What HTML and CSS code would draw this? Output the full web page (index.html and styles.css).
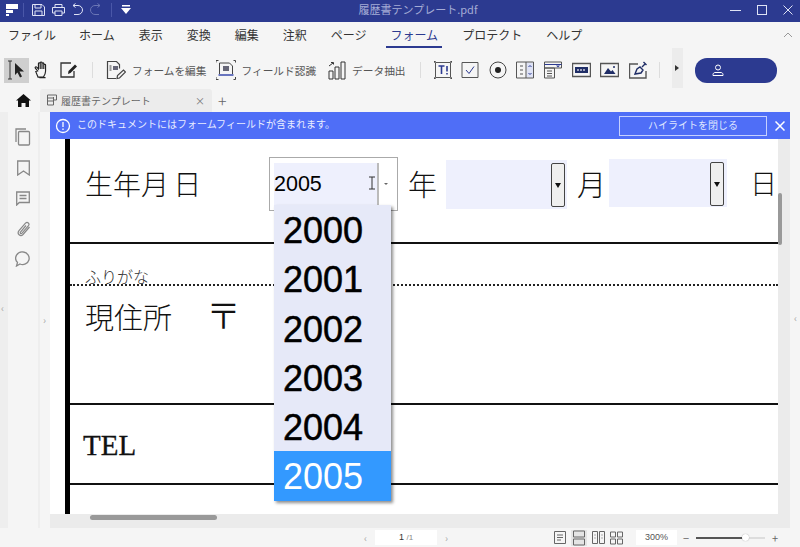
FILE: index.html
```html
<!DOCTYPE html>
<html lang="ja">
  <head>
    <meta charset="UTF-8" />
    <title>履歴書テンプレート.pdf</title>
    <link rel="stylesheet" href="styles.css">
  </head>
  <body>
    <div class="app">
      <header class="titlebar">
        <div class="quick">
          <svg class="logo" width="12" height="12" viewBox="0 0 12 12"><path d="M0 0h12v5H0zM0 6h7v3H0zM0 10h3v2H0z" fill="#fff"/></svg>
          <span class="vsep"></span>
          <svg class="ic-save" width="13" height="14" viewBox="0 0 13 14" fill="none" stroke="#dfe3f5"><path d="M.5 1.500h9.500l2.500 2.500v8.500h-12zM3 1.500v3.500h6v-3.500M3 12.500v-4.500h7v4.500"/></svg>
          <svg width="13" height="14" viewBox="0 0 13 14" fill="none" stroke="#dfe3f5"><path d="M3 4.500v-3h7v3M3 10h-2.500v-5.500h12v5.500h-2.500M3 8h7v4.500h-7z"/></svg>
          <svg width="11" height="14" viewBox="0 0 11 14" fill="none" stroke="#dfe3f5"><path d="M1 2.500h5a4.200 4.200 0 0 1 0 9h-4M1 2.500l2.500-2M1 2.500l2.500 2"/></svg>
          <svg width="11" height="14" viewBox="0 0 11 14" fill="none" stroke="#6a75b5"><path d="M10 2.500h-5a4.200 4.200 0 0 0 0 9h4M10 2.500l-2.500-2M10 2.500l-2.500 2"/></svg>
          <span class="vsep dim"></span>
          <svg width="10" height="10" viewBox="0 0 10 10"><path d="M1 0h8v1.500h-8zM0 3h10l-5 6z" fill="#fff"/></svg>
        </div>
        <div class="doc-title">履歴書テンプレート.pdf</div>
        <div class="winbtns">
          <svg width="12" height="12" viewBox="0 0 12 12"><path d="M0 6.500h11" stroke="#dfe3f5"/></svg>
          <svg width="12" height="12" viewBox="0 0 12 12" fill="none"><rect x="1.500" y="1.500" width="9" height="9" stroke="#dfe3f5"/></svg>
          <svg width="12" height="12" viewBox="0 0 12 12"><path d="M1.500 1.500l9 9M10.500 1.500l-9 9" stroke="#dfe3f5"/></svg>
        </div>
      </header>

      <nav class="menubar">
        <span class="menu m-file">ファイル</span>
        <span class="menu m-home">ホーム</span>
        <span class="menu">表示</span>
        <span class="menu">変換</span>
        <span class="menu">編集</span>
        <span class="menu">注釈</span>
        <span class="menu">ページ</span>
        <span class="menu active">フォーム</span>
        <span class="menu">プロテクト</span>
        <span class="menu">ヘルプ</span>
        <svg class="collapse" width="10" height="6" viewBox="0 0 10 6" fill="none"><path d="M1 5l4-4 4 4" stroke="#999"/></svg>
      </nav>

      <div class="toolbar">
        <div class="tool sel">
          <svg width="24" height="24" viewBox="0 0 24 24"><path d="M3 3h4M3 21h4M5 3v18" stroke="#333" fill="none"/><path d="M10 5l9 8.500h-4.500l2.500 5-2 1-2.500-5-2.500 2.500z" fill="#222"/></svg>
        </div>
        <svg class="tool-ic" width="16" height="20" viewBox="0 0 18 20" fill="none" stroke="#222" stroke-width="1.300"><path d="M4 11l-2.500-3c-.8-1.200.7-2.200 1.600-1.200l1.900 2V3c0-1.500 2-1.500 2 0v-1c0-1.300 2-1.300 2 0v1c0-1.300 2-1.300 2 0v1.500c0-1.200 2-1.200 2 0v7c0 3-1.500 5-2.500 6.500h-6c-.5-2-1.500-3-2.500-6.500zM7 3v6M9 2v7M11 3v6M6 18.500h7"/></svg>
        <svg class="tool-ic gap-l" width="18" height="16" viewBox="0 0 18 16" fill="none" stroke="#333" stroke-width="1.300"><path d="M14 9v6h-13v-14h10"/><path d="M8 12l.5-3 6.500-6.500 2 2-6.500 6.500z" fill="#222" stroke="none"/></svg>
        <span class="tsep s1"></span>
        <div class="labeled l1">
          <svg width="20" height="20" viewBox="0 0 20 20" fill="none" stroke="#444" stroke-width="1.200"><path d="M10 18.500h-8.500v-17h9l3 3v4"/><path d="M7 6h5v4h-5z" fill="#667" stroke="none"/><path d="M3.500 6h2M3.500 8h2M3.500 10h2" stroke-width="1"/><path d="M11 18.500l.5-3 6-5.500 2 2-6 6z"/></svg>
          <span>フォームを編集</span>
        </div>
        <div class="labeled l2">
          <svg width="20" height="20" viewBox="0 0 20 20" fill="none" stroke="#444"><path d="M0 2.500v-2h2.500M17.500.500h2v2M0 17v2.500h2.500M17.500 19.500h2v-2.500"/><path d="M3.500 14v-11h10l3 3v8"/><path d="M7 6h6v5h-6z" fill="#667" stroke="none"/><path d="M2.500 15h15" stroke="#3949ab" stroke-width="1.500"/></svg>
          <span>フィールド認識</span>
        </div>
        <div class="labeled l3">
          <svg width="18" height="20" viewBox="0 0 18 20" fill="none" stroke="#333"><path d="M1 11h4v8h-4zM7 7h4v12h-4zM13 2h4v17h-4z"/><path d="M1 6l4-3M3 2.500h2.500v2"/></svg>
          <span>データ抽出</span>
        </div>
        <span class="tsep s2"></span>
        <div class="form-tools">
          <svg width="18" height="18" viewBox="0 0 18 18" fill="none" stroke="#555"><path d="M1.500 1.500h15v15h-15z"/><path d="M4.500 5h6M7.500 5v8M13 5v5.500M13 12v1.500" stroke="#2c3a90" stroke-width="1.600"/><path d="M0 2v-2h2M16 0h2v2M0 16v2h2M18 16v2h-2" stroke="#111"/></svg>
          <svg width="18" height="18" viewBox="0 0 18 18" fill="none" stroke="#555"><path d="M1 1.500h16v15h-16z"/><path d="M5 9l3 3.500 5-7" stroke="#2c3a90"/></svg>
          <svg width="18" height="18" viewBox="0 0 18 18" fill="none" stroke="#444"><circle cx="9" cy="9" r="8"/><circle cx="9" cy="9" r="3" fill="#222" stroke="none"/></svg>
          <svg width="18" height="18" viewBox="0 0 18 18" fill="none" stroke="#555"><path d="M10.500 1.500h6.500v15h-6.500z" fill="#dfe3f5" stroke="none"/><path d="M.5 1h17v16h-17zM10 1v16"/><path d="M4 5h3M4 9h3M4 13h3"/><path d="M12.500 6l1.500-1.500 1.500 1.500M12.500 12l1.500 1.500 1.500-1.500" stroke="#2c3a90"/></svg>
          <svg width="18" height="18" viewBox="0 0 18 18" fill="none" stroke="#555"><path d="M.5 1h17v6h-17zM.5 7h10v10h-10z"/><path d="M.5 3.500h17" stroke="#2c3a90"/><path d="M3 10h5M3 12.500h5M3 15h5"/><path d="M12 4.500h4l-2 2z" fill="#2c3a90" stroke="none"/></svg>
          <svg width="19" height="18" viewBox="0 0 19 18" fill="none" stroke="#555" class="thick"><path d="M.5 2.500h18v13h-18z"/><rect x="3" y="6" width="13" height="6" fill="#1f2d66" stroke="none"/><path d="M5 9h9" stroke="#ccd" stroke-dasharray="2 1"/></svg>
          <svg width="19" height="18" viewBox="0 0 19 18" fill="none" stroke="#555" class="thick"><path d="M.5 2.500h18v13h-18z"/><path d="M4 13l4-6 3 3.500 1.500-1.500 3 4z" fill="#1f2d66" stroke="none"/><circle cx="14" cy="6" r="1" fill="#1f2d66" stroke="none"/></svg>
          <svg width="19" height="18" viewBox="0 0 19 18" fill="none" stroke="#555" class="thick"><path d="M9 3h-8.500v14h16.500v-7"/><path d="M6 13l2-5 3-2 3 3-2 3zM13 6l3-3M14.500 1l3 3" stroke="#1f2d66"/></svg>
        </div>
        <span class="tsep s3"></span>
        <div class="expander"><svg width="4" height="6" viewBox="0 0 4 6"><path d="M0 0l4 3-4 3z" fill="#333"/></svg></div>
        <div class="account">
          <svg width="12" height="13" viewBox="0 0 12 13" fill="none" stroke="#fff"><circle cx="6" cy="3.500" r="2.500"/><path d="M1 11.500v-1c0-1 1-2 2-2h6c1 0 2 1 2 2v1z"/></svg>
        </div>
      </div>

      <div class="tabrow">
        <svg class="home" width="15" height="13" viewBox="0 0 15 13"><path d="M7.500 0l7.500 6.500h-2v6.500h-3.500v-4h-4v4h-3.500v-6.500h-2z" fill="#111"/></svg>
        <div class="tab">
          <svg width="10" height="12" viewBox="0 0 10 12" fill="none" stroke="#666"><path d="M.5 1h9v5h-3M.5 1v10h6v-8M.5 4h6M.5 7h6"/></svg>
          <span class="tab-name">履歴書テンプレート</span>
          <span class="tab-x">×</span>
        </div>
        <span class="tab-plus">+</span>
      </div>

      <div class="workarea">
        <aside class="sidebar">
          <div class="side-icons">
            <svg width="16" height="18" viewBox="0 0 16 18" fill="none" stroke="#888" stroke-width="1.300"><path d="M1 14v-13h10"/><rect x="3.500" y="3.500" width="11" height="13.500" rx="1"/></svg>
            <svg width="13" height="16" viewBox="0 0 13 16" fill="none" stroke="#888" stroke-width="1.300"><path d="M.7 1h11.600v14l-5.800-4-5.800 4z"/></svg>
            <svg width="14" height="15" viewBox="0 0 14 15" fill="none" stroke="#888" stroke-width="1.300"><path d="M.7 1h12.600v10.500h-10l-2.600 2.500zM3.500 4.500h7M3.500 7.500h7"/></svg>
            <svg width="15" height="16" viewBox="0 0 15 16" fill="none" stroke="#888" stroke-width="1.200"><path d="M13.500 6l-6.500 7.500c-2.500 2.500-6.500-.5-4-3.800l6.500-7.500c2-2 4.500.5 3 2.500l-6.500 7.500c-1 1-2.300 0-1.500-1.200l5.500-6.500"/></svg>
            <svg width="16" height="16" viewBox="0 0 16 16" fill="none" stroke="#888" stroke-width="1.300"><path d="M8.500 1a6.500 6.300 0 1 1-3.500 12l-3.500 2 1-3.500a6.500 6.300 0 0 1 6-10.500z"/></svg>
          </div>
        </aside>
        <div class="splitter"></div>
        <span class="edge-arrow ea-left">‹</span>
        <span class="edge-arrow ea-mid">›</span>
        <span class="edge-arrow ea-right">‹</span>

        <main class="viewer">
          <div class="banner">
            <svg width="16" height="16" viewBox="0 0 16 16" fill="none" stroke="#fff" stroke-width="1.300"><circle cx="8" cy="8" r="6.500"/><path d="M8 4v5M8 10.500v1.500"/></svg>
            <span class="banner-text">このドキュメントにはフォームフィールドが含まれます。</span>
            <button class="hl-close">ハイライトを閉じる</button>
            <svg class="banner-x" width="10" height="10" viewBox="0 0 10 10"><path d="M.5.500l9 9M9.500.500l-9 9" stroke="#fff" stroke-width="1.500"/></svg>
          </div>

          <div class="docrow">
            <div class="page">
              <span class="pdf-text birth">生年月 日</span>
              <span class="pdf-text nen">年</span>
              <span class="pdf-text tsuki">月</span>
              <span class="pdf-text hi">日</span>
              <span class="rule r1"></span>
              <span class="furigana">ふりがな</span>
              <span class="rule dotted"></span>
              <span class="pdf-text addr">現住所</span>
              <span class="pdf-text zip">〒</span>
              <span class="rule r2"></span>
              <span class="tel">TEL</span>
              <span class="rule r3"></span>

              <div class="field focus">
                <div class="field-in">2005
                  <svg class="ibeam" width="8" height="14" viewBox="0 0 8 14" fill="none" stroke="#333"><path d="M1 1h6M1 13h6M4 1v12"/></svg>
                </div>
                <div class="field-btn"><span class="caret small"></span></div>
              </div>
              <div class="field f-month"><div class="combo-btn"><span class="caret"></span></div></div>
              <div class="field f-day"><div class="combo-btn"><span class="caret"></span></div></div>

              <ul class="dropdown">
                <li>2000</li>
                <li>2001</li>
                <li>2002</li>
                <li>2003</li>
                <li>2004</li>
                <li class="picked">2005</li>
              </ul>
            </div>
            <div class="vscroll"><div class="vthumb"></div></div>
          </div>
          <div class="hscroll"><div class="hthumb"></div></div>
        </main>
        <div class="right-edge"></div>
      </div>

      <footer class="statusbar">
        <span class="pg-arrow">‹</span>
        <div class="pg-box"><b>1</b> <small>/1</small></div>
        <span class="pg-arrow">›</span>
        <div class="views">
          <svg width="12" height="15" viewBox="0 0 12 15" fill="none" stroke="#666"><path d="M.5 1.500h11v12h-11zM3 5h6M3 7.500h6M3 10h4"/></svg>
          <span class="view-on"><svg width="14" height="16" viewBox="0 0 14 16" fill="none" stroke="#666"><path d="M1.500 1h11v6h-11zM1.500 9h11v6h-11z"/></svg></span>
          <svg width="13" height="15" viewBox="0 0 13 15" fill="none" stroke="#666"><path d="M.5 1.500h5v12h-5zM7.500 1.500h5v12h-5zM2.500 5h1M2.500 8h1M9.500 5h1M9.500 8h1"/></svg>
          <svg width="13" height="15" viewBox="0 0 13 15" fill="none" stroke="#666"><path d="M.5 2h5v5h-5zM7.500 2h5v5h-5zM.5 9h5v5h-5zM7.500 9h5v5h-5z"/></svg>
        </div>
        <div class="zoom-box">300%</div>
        <span class="zoom-op">−</span>
        <div class="slider"><div class="slider-fill"></div><div class="slider-knob"></div></div>
        <span class="zoom-op plus">+</span>
      </footer>
    </div>
  </body>
</html>
```

FILE: styles.css
```css
* {
  box-sizing: border-box;
}

body {
  margin: 0;
  width: 800px;
  height: 547px;
  overflow: hidden;
  background: #f5f5f5;
  font-family: "Noto Sans CJK JP", "Noto Sans", sans-serif;
  color: #333;
}

.app {
  display: flex;
  flex-direction: column;
  height: 547px;
}

/* title bar */
.titlebar {
  height: 22px;
  background: #2c3a90;
  display: flex;
  align-items: center;
  position: relative;
  flex: none;
  padding-bottom: 2px;
}

.quick {
  display: flex;
  align-items: center;
  gap: 7px;
  padding-left: 6px;
}

.vsep {
  width: 1px;
  height: 14px;
  background: #4a57a8;
  margin-left: -2px;
}

.ic-save {
  margin-left: 1px;
}

.vsep.dim {
  margin: 0 2px 0 3px;
}

.doc-title {
  position: absolute;
  left: 36px;
  right: 0;
  top: 0;
  text-align: center;
  font-size: 11px;
  color: #a5acd6;
  line-height: 18px;
}

.winbtns {
  margin-left: auto;
  display: flex;
  gap: 14px;
  padding-right: 6px;
}

/* menu */
.menubar {
  height: 26px;
  flex: none;
  display: flex;
  align-items: center;
  font-size: 12px;
  position: relative;
  background: #f5f5f5;
}

.menu {
  position: relative;
  height: 26px;
  line-height: 26px;
  margin-left: 24px;
  color: #333;
}

.m-file {
  margin-left: 8px;
}

.m-home {
  margin-left: 23px;
}

.menu.active {
  color: #2c3a90;
  border-bottom: 2px solid #2c3a90;
  padding: 0 4px;
  margin: 0 -4px 0 20px;
}

.collapse {
  margin-left: auto;
  margin-right: 7px;
}

/* toolbar */
.toolbar {
  height: 40px;
  flex: none;
  display: flex;
  align-items: center;
  padding: 4px 0 0 4px;
  font-size: 10.700px;
  color: #555;
}

.tool {
  width: 25px;
  height: 25px;
  background: #cfcfcf;
  display: flex;
  align-items: center;
  justify-content: center;
}

.tool-ic {
  margin-left: 5px;
}

.tool-ic.gap-l {
  margin-left: 10px;
}

.tsep {
  width: 1px;
  height: 16px;
  background: #ddd;
}

.tsep.s1 {
  margin: 0 13px 0 14px;
}

.tsep.s2 {
  margin: 0 13px 0 14px;
}

.tsep.s3 {
  margin: 0 12px 0 11px;
}

.labeled {
  display: flex;
  align-items: center;
  gap: 6px;
  white-space: nowrap;
}

.l2 {
  margin-left: 9px;
}

.l3 {
  margin-left: 12px;
}

.form-tools {
  display: flex;
  align-items: center;
  gap: 9.600px;
}

.form-tools .thick {
  stroke-width: 1.400;
}

.expander {
  width: 11px;
  height: 40px;
  align-self: flex-start;
  margin-top: -4px;
  background: #ececec;
  display: flex;
  align-items: center;
  justify-content: center;
}

.account {
  margin-left: 12px;
  width: 82px;
  height: 25px;
  border-radius: 12px;
  background: #2c3a90;
  display: flex;
  align-items: center;
  padding-left: 17px;
}

/* tabs */
.tabrow {
  height: 24px;
  flex: none;
  display: flex;
  align-items: center;
  background: #f5f5f5;
}

.home {
  margin-left: 16px;
}

.tab {
  margin-left: 9px;
  width: 172px;
  height: 23px;
  background: #ececec;
  border-radius: 3px 3px 0 0;
  display: flex;
  align-items: center;
  padding-left: 7px;
  font-size: 10px;
  color: #666;
}

.tab-name {
  margin-left: 4px;
}

.tab-x {
  margin-left: auto;
  margin-right: 7px;
  font-size: 10px;
  color: #777;
}

.tab-plus {
  margin-left: 6px;
  font-size: 16px;
  color: #666;
  font-weight: 300;
}

/* main area */
.workarea {
  flex: 1;
  display: flex;
  min-height: 0;
  position: relative;
}

.sidebar {
  width: 40px;
  flex: none;
  border-left: 8px solid #eeeeee;
  border-right: 2px solid #eeeeee;
}

.side-icons {
  display: grid;
  grid-auto-rows: 30.500px;
  justify-items: center;
  align-items: center;
  padding-top: 10px;
}

.splitter {
  width: 10px;
  flex: none;
}

.edge-arrow {
  position: absolute;
  font-size: 10px;
  line-height: 12px;
  color: #aaa;
}

.ea-left { left: 1px; top: 190px; }
.ea-mid { left: 43px; top: 202px; }
.ea-right { left: 794px; top: 200px; }

.viewer {
  width: 740px;
  flex: none;
  display: flex;
  flex-direction: column;
  background: #ebebeb;
}

.banner {
  height: 27px;
  flex: none;
  background: #4f6ef7;
  display: flex;
  align-items: center;
  padding-left: 5px;
  color: #fff;
  font-size: 10px;
}

.banner-text {
  margin: 0 0 4px 6px;
  color: #e8ecff;
}

.hl-close {
  margin-left: auto;
  width: 148px;
  height: 20px;
  background: transparent;
  border: 1px solid #c5d0ff;
  color: #dfe5ff;
  font-family: inherit;
  font-size: 10px;
  padding: 0 0 3px;
}

.banner-x {
  margin: 0 5px 0 8px;
}

.docrow {
  flex: 1;
  display: flex;
  min-height: 0;
}

.page {
  width: 728px;
  flex: none;
  background: #fff;
  position: relative;
  overflow: hidden;
}

/* thick left margin of the form */
.page::before {
  content: "";
  position: absolute;
  left: 15px;
  top: 0;
  bottom: 0;
  width: 5px;
  background: #000;
}

.pdf-text {
  position: absolute;
  font-size: 29px;
  line-height: 34px;
  color: #111;
  font-weight: 300;
  font-family: "Noto Sans CJK JP", sans-serif;
}

.birth { left: 35px; top: 27px; font-size: 28px; word-spacing: -2px; }
.nen { left: 358px; top: 27px; }
.tsuki { left: 527px; top: 27px; }
.hi { left: 700px; top: 27px; font-size: 27px; }
.addr { left: 35px; top: 160px; }
.zip { left: 156px; top: 155px; font-size: 35px; line-height: 40px; }

.rule {
  position: absolute;
  left: 20px;
  right: 0;
  height: 2px;
  background: #111;
}

.r1 { top: 103px; }
.r2 { top: 264px; }
.r3 { top: 344px; }

.rule.dotted {
  top: 145px;
  background: none;
  border-top: 2px dotted #222;
}

.furigana {
  position: absolute;
  left: 35px;
  top: 128px;
  font-size: 16px;
  line-height: 18px;
  color: #333;
  font-family: "Noto Sans CJK JP", sans-serif;
  font-weight: 300;
}

.tel {
  position: absolute;
  left: 33px;
  top: 290px;
  font-family: "Liberation Serif", serif;
  font-size: 29px;
  line-height: 32px;
  color: #111;
  -webkit-text-stroke: 0.3px #111;
}

.field {
  position: absolute;
  background: #eef0fd;
}

.field.focus {
  left: 219px;
  top: 18px;
  width: 129px;
  height: 54px;
  background: #fff;
  border: 1px solid #aaa;
  padding: 5px 5px 5px 4px;
  display: flex;
}

.field-in {
  width: 105px;
  background: #eef0fd;
  font-family: "Liberation Sans", sans-serif;
  font-size: 21.500px;
  line-height: 42px;
  color: #000;
  position: relative;
  border-right: 2px solid #bbb;
}

.ibeam {
  position: absolute;
  left: 94px;
  top: 13px;
}

.field-btn {
  width: 13px;
  display: flex;
  align-items: center;
  justify-content: center;
}

.caret {
  width: 0;
  height: 0;
  border-left: 3px solid transparent;
  border-right: 3px solid transparent;
  border-top: 5px solid #111;
}

.caret.small {
  border-width: 2px 2px 0;
  border-top-color: #666;
}

.f-month {
  left: 396px;
  top: 21px;
  width: 121px;
  height: 49px;
}

.f-day {
  left: 559px;
  top: 20px;
  width: 118px;
  height: 48px;
}

.combo-btn {
  position: absolute;
  right: 2px;
  top: 3px;
  width: 14px;
  height: 44px;
  background: #efefef;
  border: 1px solid #444;
  border-radius: 2px;
  display: flex;
  align-items: center;
  justify-content: center;
}

.f-day .combo-btn {
  right: 3px;
}

.dropdown {
  position: absolute;
  left: 224px;
  top: 66px;
  width: 117px;
  margin: 0;
  padding: 0;
  list-style: none;
  background: #e6e9f8;
  box-shadow: 2px 2px 3px rgba(0, 0, 0, 0.45);
  font-family: "Liberation Sans", sans-serif;
  font-size: 36px;
  color: #000;
  -webkit-text-stroke: 0.5px #000;
}

.dropdown li {
  height: 49.300px;
  line-height: 51px;
  padding-left: 9px;
}

.dropdown li.picked {
  background: #3399ff;
  color: #fff;
  -webkit-text-stroke: 0;
}

.vscroll {
  width: 12px;
  flex: none;
  position: relative;
}

.vthumb {
  position: absolute;
  left: 0;
  top: 54px;
  width: 4px;
  height: 52px;
  background: #999;
  border-radius: 2px;
}

.hscroll {
  height: 14px;
  flex: none;
  padding: 1px 0 0 40px;
}

.hthumb {
  width: 127px;
  height: 5px;
  background: #999;
  border-radius: 3px;
}

.right-edge {
  flex: 1;
}

/* status bar */
.statusbar {
  height: 19px;
  flex: none;
  display: flex;
  align-items: center;
  font-size: 9px;
  color: #666;
}

.pg-arrow {
  color: #aaa;
  font-size: 10px;
}

.statusbar .pg-arrow:first-child {
  margin-left: 364px;
}

.pg-box {
  width: 62px;
  height: 15px;
  margin: 0 8px;
  background: #fff;
  text-align: center;
  line-height: 15px;
  font-family: "Liberation Sans", sans-serif;
}

.pg-box b {
  font-weight: 400;
  color: #333;
}

.pg-box small {
  font-size: 8px;
  color: #888;
}

.views {
  margin-left: 106px;
  display: flex;
  align-items: center;
  gap: 5px;
}

.view-on {
  width: 16px;
  height: 16px;
  background: #e4e4e4;
  display: flex;
  justify-content: center;
}

.zoom-box {
  margin-left: 13px;
  width: 41px;
  height: 15px;
  background: #fff;
  text-align: center;
  line-height: 15px;
  font-family: "Liberation Sans", sans-serif;
  color: #555;
}

.zoom-op {
  margin-left: 5px;
  width: 8px;
  font-size: 11px;
  text-align: center;
}

.zoom-op.plus {
  margin-left: 6px;
}

.slider {
  margin-left: 6px;
  width: 69px;
  height: 2px;
  background: #ddd;
  position: relative;
}

.slider-fill {
  width: 49px;
  height: 2px;
  background: #555;
}

.slider-knob {
  position: absolute;
  left: 46px;
  top: -3px;
  width: 7px;
  height: 7px;
  border-radius: 50%;
  background: #fff;
  box-shadow: 0 0 1px rgba(0, 0, 0, 0.4);
}
```
